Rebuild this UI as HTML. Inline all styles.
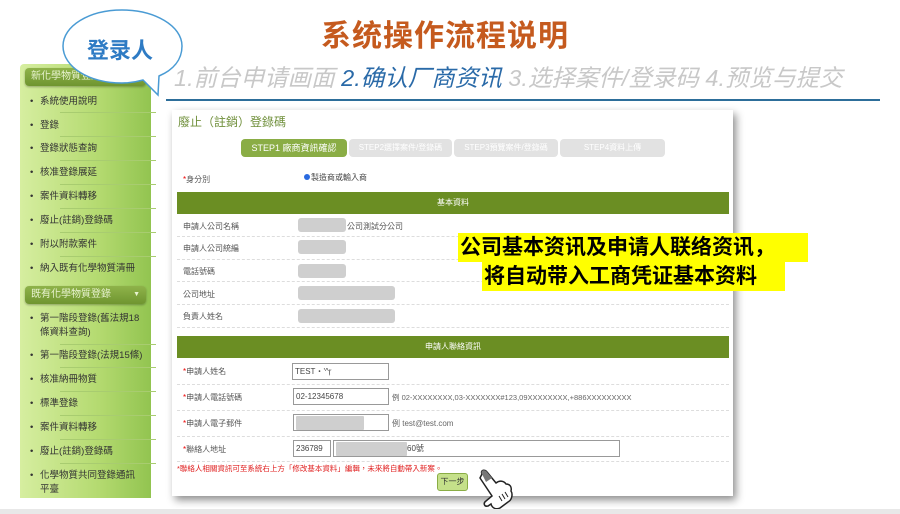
<!DOCTYPE html>
<html><head><meta charset="utf-8">
<style>
*{margin:0;padding:0;box-sizing:border-box}
body{width:900px;height:514px;position:relative;background:#fff;overflow:hidden;font-family:"Liberation Sans","Noto Sans CJK TC",sans-serif}
.a{position:absolute;white-space:nowrap}
.sc{font-family:"Liberation Sans","Noto Sans CJK SC",sans-serif}
.side{position:absolute;left:20px;top:64px;width:131px;height:434px;background:linear-gradient(90deg,#d6eea0,#b4da70 60%,#92c450);border-radius:4px 4px 0 0}
.hd{position:absolute;left:5px;width:121px;height:18px;background:linear-gradient(#8fb34a,#6f9530);border-radius:4px;color:#e8f3d0;font-size:10px;line-height:18px;padding-left:6px;box-shadow:0 1px 2px rgba(0,0,0,.3)}
.it{position:absolute;left:20px;font-size:9.5px;color:#333;line-height:14px}
.it:before{content:"•";position:absolute;left:-10px}
.sep{position:absolute;left:40px;width:96px;height:1px;background:#a8cc70}
.lbl{position:absolute;left:183px;font-size:8px;color:#555}
.rq:before{content:"*";color:#e00}
.gb{position:absolute;background:#cfcfcf;border-radius:3px;height:14px}
.dash{position:absolute;left:177px;width:552px;border-top:1px dashed #ddd}
.inp{position:absolute;border:1px solid #999;background:#fff;height:17px;font-size:8px;color:#444;line-height:15px;padding-left:2px}
</style></head><body>
<div class="a sc" style="left:321px;top:11px;font-size:30px;font-weight:bold;color:#c55a1e;letter-spacing:1px">系统操作流程说明</div>
<div class="a sc" style="left:174px;top:59px;font-size:23.5px;font-style:italic;color:#c8c8c8">1.前台申请画面 <span style="color:#2a6aa8">2.确认厂商资讯</span> 3.选择案件/登录码 4.预览与提交</div>
<div class="a" style="left:166px;top:99px;width:714px;height:2px;background:#2d6e9a"></div>

<div class="side">
<div class="hd" style="top:4px">新化學物質登錄</div>
<div class="it" style="top:31px">系統使用說明</div><div class="sep" style="top:48px;left:40px"></div>
<div class="it" style="top:55px">登錄</div><div class="sep" style="top:72px"></div>
<div class="it" style="top:78px">登錄狀態查詢</div><div class="sep" style="top:96px"></div>
<div class="it" style="top:102px">核准登錄展延</div><div class="sep" style="top:120px"></div>
<div class="it" style="top:126px">案件資料轉移</div><div class="sep" style="top:144px"></div>
<div class="it" style="top:150px">廢止(註銷)登錄碼</div><div class="sep" style="top:168px"></div>
<div class="it" style="top:174px">附以附款案件</div><div class="sep" style="top:192px"></div>
<div class="it" style="top:198px">納入既有化學物質清冊</div>
<div class="hd" style="top:222px">既有化學物質登錄<span style="position:absolute;right:6px;font-size:7px">▼</span></div>
<div class="it" style="top:248px">第一階段登錄(舊法規18<br>條資料查詢)</div><div class="sep" style="top:280px"></div>
<div class="it" style="top:285px">第一階段登錄(法規15條)</div><div class="sep" style="top:303px"></div>
<div class="it" style="top:309px">核准納冊物質</div><div class="sep" style="top:327px"></div>
<div class="it" style="top:333px">標準登錄</div><div class="sep" style="top:351px"></div>
<div class="it" style="top:357px">案件資料轉移</div><div class="sep" style="top:375px"></div>
<div class="it" style="top:381px">廢止(註銷)登錄碼</div><div class="sep" style="top:399px"></div>
<div class="it" style="top:405px">化學物質共同登錄通訊<br>平臺</div>
</div>

<svg class="a" style="left:55px;top:5px" width="135" height="95"><path d="M67 5 C100 5 127 21 127 41 C127 55 118 65 104 71 L103 90 L88 75 C81 77 74 78 67 78 C34 78 8 62 8 41 C8 21 34 5 67 5Z" fill="#fff" stroke="#4a9bd4" stroke-width="1.5"/></svg>
<div class="a sc" style="left:87px;top:33px;font-size:22px;font-weight:bold;color:#2e7bc4">登录人</div>

<div class="a" style="left:172px;top:110px;width:561px;height:386px;background:#fff;box-shadow:3px 4px 8px rgba(0,0,0,.45)"></div>
<div class="a" style="left:178px;top:113px;font-size:12px;color:#6f8f3a">廢止（註銷）登錄碼</div>
<div class="a" style="left:241px;top:139px;width:106px;height:18px;background:#8aad45;border-radius:4px;color:#fff;font-size:9px;text-align:center;line-height:18px">STEP1 廠商資訊確認</div>
<div class="a" style="left:349px;top:139px;width:103px;height:18px;background:#e2e2e2;border-radius:4px;color:#fff;font-size:8px;text-align:center;line-height:18px">STEP2選擇案件/登錄碼</div>
<div class="a" style="left:454px;top:139px;width:104px;height:18px;background:#e2e2e2;border-radius:4px;color:#fff;font-size:8px;text-align:center;line-height:18px">STEP3預覽案件/登錄碼</div>
<div class="a" style="left:560px;top:139px;width:105px;height:18px;background:#e2e2e2;border-radius:4px;color:#fff;font-size:8px;text-align:center;line-height:18px">STEP4資料上傳</div>
<div class="lbl rq" style="top:174px">身分別</div>
<div class="a" style="left:304px;top:172px;font-size:8px;color:#444"><span style="display:inline-block;width:6px;height:6px;border-radius:50%;background:#2a6ae0;margin-right:1px"></span>製造商或輸入商</div>
<div class="a" style="left:177px;top:192px;width:552px;height:22px;background:#6b8e23;color:#fff;font-size:8px;text-align:center;line-height:22px">基本資料</div>
<div class="lbl" style="top:221px">申請人公司名稱</div><div class="gb" style="left:298px;top:218px;width:48px"></div><div class="a" style="left:347px;top:221px;font-size:8px;color:#555">公司測試分公司</div>
<div class="dash" style="top:236px"></div>
<div class="lbl" style="top:243px">申請人公司統編</div><div class="gb" style="left:298px;top:240px;width:48px"></div>
<div class="dash" style="top:259px"></div>
<div class="lbl" style="top:266px">電話號碼</div><div class="gb" style="left:298px;top:264px;width:48px"></div>
<div class="dash" style="top:281px"></div>
<div class="lbl" style="top:289px">公司地址</div><div class="gb" style="left:298px;top:286px;width:97px"></div>
<div class="dash" style="top:304px"></div>
<div class="lbl" style="top:311px">負責人姓名</div><div class="gb" style="left:298px;top:309px;width:97px"></div>
<div class="dash" style="top:327px"></div>
<div class="a" style="left:177px;top:336px;width:552px;height:22px;background:#6b8e23;color:#fff;font-size:8px;text-align:center;line-height:22px">申請人聯絡資訊</div>
<div class="lbl rq" style="top:366px">申請人姓名</div><div class="inp" style="left:292px;top:363px;width:97px">TEST・'^ŗ</div>
<div class="dash" style="top:384px"></div>
<div class="lbl rq" style="top:392px">申請人電話號碼</div><div class="inp" style="left:293px;top:388px;width:96px">02-12345678</div>
<div class="a" style="left:392px;top:392px;font-size:7.5px;color:#666">例 02-XXXXXXXX,03-XXXXXXX#123,09XXXXXXXX,+886XXXXXXXXX</div>
<div class="dash" style="top:410px"></div>
<div class="lbl rq" style="top:418px">申請人電子郵件</div><div class="inp" style="left:293px;top:414px;width:96px"><div class="gb" style="left:2px;top:1px;width:68px;border-radius:1px"></div></div>
<div class="a" style="left:392px;top:418px;font-size:8px;color:#666">例 test@test.com</div>
<div class="dash" style="top:436px"></div>
<div class="lbl rq" style="top:444px">聯絡人地址</div><div class="inp" style="left:293px;top:440px;width:38px">236789</div>
<div class="inp" style="left:333px;top:440px;width:287px"><div class="gb" style="left:2px;top:1px;width:71px;border-radius:1px"></div><span style="position:absolute;left:73px">60號</span></div>
<div class="dash" style="top:461px"></div>
<div class="a" style="left:177px;top:463px;font-size:7.5px;color:#e02020">*聯絡人相關資訊可至系統右上方「修改基本資料」編輯，未來將自動帶入新案。</div>
<div class="a" style="left:437px;top:473px;width:31px;height:18px;background:#c5e08a;border:1px solid #8aad45;border-radius:3px;font-size:8px;color:#333;text-align:center;line-height:16px">下一步</div>
<svg class="a" style="left:474px;top:468px" width="42" height="42"><path d="M8 6 C6 2 11 1 13 4 L22 15 C26 12 30 13 32 16 C36 16 38 19 37 23 C39 26 38 32 34 34 L26 40 C22 42 18 40 17 36 L14 38 C10 39 9 35 12 33 L18 28 L6 10 Z" fill="#fff" stroke="#222" stroke-width="1.5"/><path d="M8 6 C6 2 11 1 13 4 L18 10 L12 14 Z" fill="#777"/><path d="M25 28 L28 33 M28 26 L31 31 M31 24 L34 29" stroke="#222" stroke-width="1"/></svg>

<div class="a sc" style="left:458px;top:233px;height:29px;width:350px;background:#ffff00;font-size:21px;font-weight:bold;color:#000;line-height:29px;padding-left:2px">公司基本资讯及申请人联络资讯，</div>
<div class="a sc" style="left:482px;top:262px;height:29px;width:303px;background:#ffff00;font-size:21px;font-weight:bold;color:#000;line-height:29px;padding-left:2px">将自动带入工商凭证基本资料</div>
<div class="a" style="left:0;top:509px;width:900px;height:5px;background:#e8e8e8"></div>
</body></html>
